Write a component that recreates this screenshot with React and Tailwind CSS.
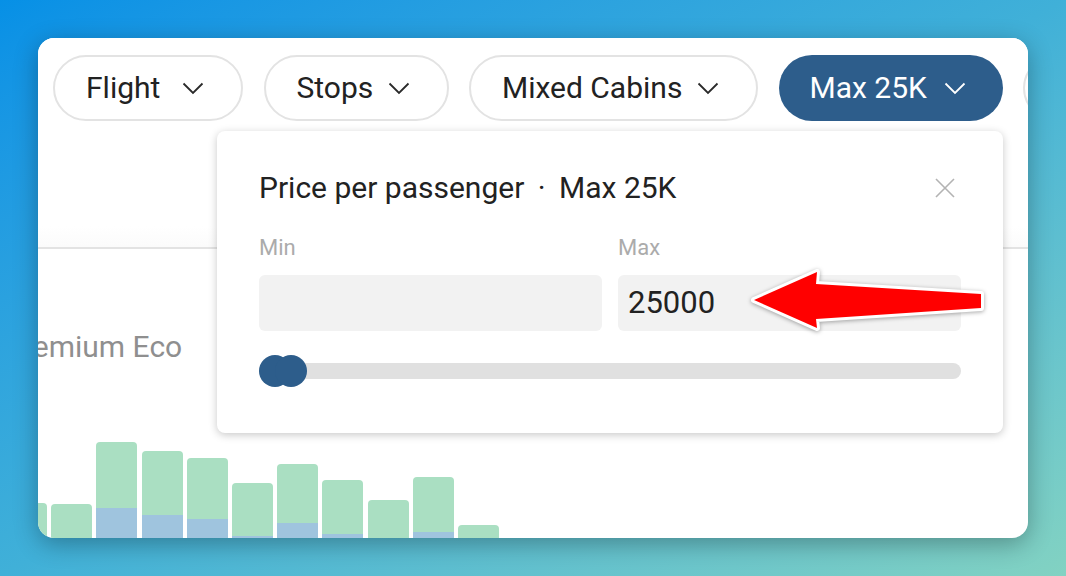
const font = { fontFamily: "Roboto, 'Liberation Sans', sans-serif" };

const pills = [
  { label: "Flight", width: "w-[190px]" },
  { label: "Stops", width: "w-[185px]" },
  { label: "Mixed Cabins", width: "w-[289px]" },
  { label: "Max 25K", width: "w-[224px]", active: true },
  { label: "Airlines", width: "w-[170px]" },
];

// price histogram, heights in px from the card floor
const bars = [
  { total: 35, low: 0 },
  { total: 34, low: 0 },
  { total: 96, low: 30 },
  { total: 87, low: 23 },
  { total: 80, low: 19 },
  { total: 55, low: 2 },
  { total: 74, low: 15 },
  { total: 58, low: 4 },
  { total: 38, low: 0 },
  { total: 61, low: 6 },
  { total: 13, low: 0 },
];

const Chevron = ({ className }) => (
  <svg width="22" height="13" viewBox="0 0 22 13" fill="none" className={className}>
    <polyline points="1.5,1.5 11,11 20.5,1.5" stroke="currentColor" strokeWidth="1.8" />
  </svg>
);

const CloseIcon = () => (
  <svg width="20" height="20" viewBox="0 0 20 20" className="mr-[6px] text-[#b3b3b3]">
    <path d="M1 1 L19 19 M19 1 L1 19" stroke="currentColor" strokeWidth="1.6" />
  </svg>
);

const Pill = ({ label, width, active }) => (
  <button
    className={`flex h-[66px] shrink-0 items-center justify-between rounded-full pl-[31px] pr-[37px] text-[30px] ${width} ${
      active
        ? "bg-[#2d5d8b] text-white"
        : "border-2 border-[#e3e3e3] bg-white text-[#222222]"
    }`}
  >
    <span className="leading-none">{label}</span>
    <Chevron className={active ? "text-white" : "text-[#2a2a2a]"} />
  </button>
);

const PricePopover = () => (
  <div className="absolute left-[179px] top-[93px] h-[302px] w-[786px] rounded-lg bg-white px-[42px] pt-[40px] shadow-[0_2px_8px_rgba(0,0,0,0.22)]">
    <div className="flex items-center justify-between">
      <h3 className="text-[30px] leading-[34px] text-[#222222]">
        Price per passenger <span className="mx-[6px]">·</span> Max 25K
      </h3>
      <CloseIcon />
    </div>

    <div className="mt-[30px] grid grid-cols-2 gap-x-4">
      <div>
        <div className="mb-[14px] text-[22px] leading-[26px] text-[#ababab]">Min</div>
        <div className="h-[56px] rounded-md bg-[#f2f2f2]" />
      </div>
      <div>
        <div className="mb-[14px] text-[22px] leading-[26px] text-[#ababab]">Max</div>
        <div className="flex h-[56px] items-center rounded-md bg-[#f2f2f2] pl-[10px] text-[31px] text-[#222222]">
          25000
        </div>
      </div>
    </div>

    <div className="relative mt-[24px] flex h-[32px] items-center">
      <div className="h-[16px] w-full rounded-full bg-[#e0e0e0]" />
      <div className="absolute left-0 top-0 h-[32px] w-[32px] rounded-full bg-[#2d5d8b]" />
      <div className="absolute left-[16px] top-0 h-[32px] w-[32px] rounded-full bg-[#2d5d8b]" />
    </div>
  </div>
);

export default function App() {
  return (
    <div
      style={font}
      className="relative h-[576px] w-[1066px] overflow-hidden bg-linear-to-br from-[#0690e6] via-[#40b0d8] to-[#82d2c2] p-[38px]"
    >
      <div className="relative flex h-[500px] w-[990px] flex-col overflow-hidden rounded-2xl bg-white shadow-[0_6px_24px_rgba(0,0,0,0.3)]">
        <div className="h-[211px] shrink-0 border-b-2 border-[#e3e3e3] bg-linear-to-b from-white from-90% to-[#fbfbfb]">
          <div className="flex gap-[20.5px] pl-[15px] pt-[17px]">
            {pills.map((p) => (
              <Pill key={p.label} {...p} />
            ))}
          </div>
        </div>

        <div className="-ml-[34px] pt-[80px] text-[30px] leading-[36px] text-[#8f8f8f]">
          Premium Eco
        </div>

        <div className="-ml-[32px] mt-auto flex items-end gap-[4.2px]">
          {bars.map((b, i) => (
            <div
              key={i}
              className="flex w-[41px] shrink-0 flex-col justify-end overflow-hidden rounded-t bg-[#aadfc2]"
              style={{ height: b.total }}
            >
              <div className="bg-[#9fc4de]" style={{ height: b.low }} />
            </div>
          ))}
        </div>

        <PricePopover />
      </div>

      {/* callout arrow pointing at the max field */}
      <svg
        width="260"
        height="90"
        viewBox="0 0 260 90"
        className="absolute left-[740px] top-[258px] drop-shadow-[0_1px_2px_rgba(0,0,0,0.35)]"
      >
        <polygon
          points="14,42 77,14 76,26 241,36 241,50 76,61 77,70"
          fill="#ff0000"
          stroke="#ffffff"
          strokeWidth="6"
          strokeLinejoin="round"
          paintOrder="stroke"
        />
      </svg>
    </div>
  );
}
